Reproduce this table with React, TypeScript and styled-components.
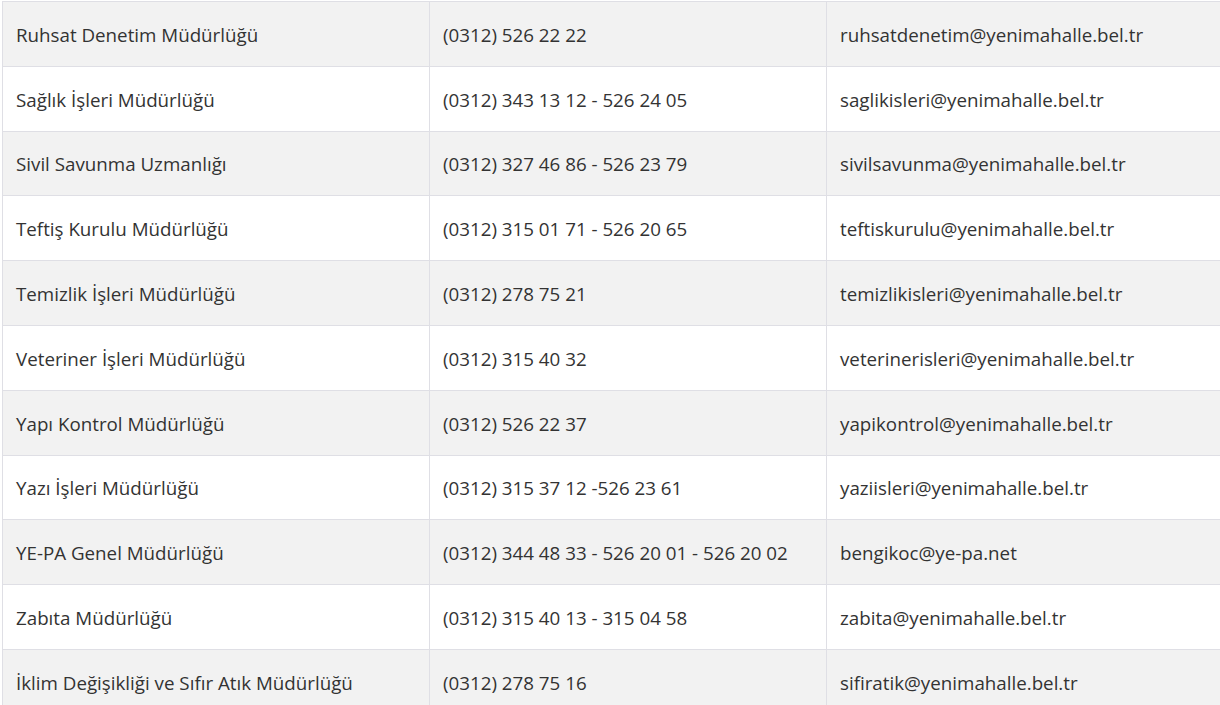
import React from "react";
import styled, { createGlobalStyle } from "styled-components";

const Global = createGlobalStyle`
  html, body { margin: 0; padding: 0; background: #fff; }
  body { font-family: "Open Sans", "Noto Sans", sans-serif; }
`;

const Page = styled.div`
  padding: 1px 0 0 2px;
  overflow: hidden;
`;

const Table = styled.table`
  width: 1218px;
  border-collapse: collapse;
  table-layout: fixed;
`;

const Row = styled.tr<{ $odd: boolean }>`
  background: ${(p) => (p.$odd ? "#f2f2f2" : "#ffffff")};
`;

const Cell = styled.td`
  border: 1px solid #dfdfe5;
  height: 64.8px;
  box-sizing: border-box;
  padding: 1px 13px 0 13px;
  font-size: 18.75px;
  color: #333333;
  vertical-align: middle;
  white-space: nowrap;
  overflow: hidden;
`;

const rows: [string, string, string][] = [
  ["Ruhsat Denetim Müdürlüğü", "(0312) 526 22 22", "ruhsatdenetim@yenimahalle.bel.tr"],
  ["Sağlık İşleri Müdürlüğü", "(0312) 343 13 12 - 526 24 05", "saglikisleri@yenimahalle.bel.tr"],
  ["Sivil Savunma Uzmanlığı", "(0312) 327 46 86 - 526 23 79", "sivilsavunma@yenimahalle.bel.tr"],
  ["Teftiş Kurulu Müdürlüğü", "(0312) 315 01 71 - 526 20 65", "teftiskurulu@yenimahalle.bel.tr"],
  ["Temizlik İşleri Müdürlüğü", "(0312) 278 75 21", "temizlikisleri@yenimahalle.bel.tr"],
  ["Veteriner İşleri Müdürlüğü", "(0312) 315 40 32", "veterinerisleri@yenimahalle.bel.tr"],
  ["Yapı Kontrol Müdürlüğü", "(0312) 526 22 37", "yapikontrol@yenimahalle.bel.tr"],
  ["Yazı İşleri Müdürlüğü", "(0312) 315 37 12 -526 23 61", "yaziisleri@yenimahalle.bel.tr"],
  ["YE-PA Genel Müdürlüğü", "(0312) 344 48 33 - 526 20 01 - 526 20 02", "bengikoc@ye-pa.net"],
  ["Zabıta Müdürlüğü", "(0312) 315 40 13 - 315 04 58", "zabita@yenimahalle.bel.tr"],
  ["İklim Değişikliği ve Sıfır Atık Müdürlüğü", "(0312) 278 75 16", "sifiratik@yenimahalle.bel.tr"],
];

export default function App() {
  return (
    <>
      <Global />
      <Page>
        <Table>
          <colgroup>
            <col style={{ width: 427 }} />
            <col style={{ width: 397 }} />
            <col style={{ width: 394 }} />
          </colgroup>
          <tbody>
            {rows.map((r, i) => (
              <Row key={i} $odd={i % 2 === 0}>
                <Cell>{r[0]}</Cell>
                <Cell>{r[1]}</Cell>
                <Cell>{r[2]}</Cell>
              </Row>
            ))}
          </tbody>
        </Table>
      </Page>
    </>
  );
}
